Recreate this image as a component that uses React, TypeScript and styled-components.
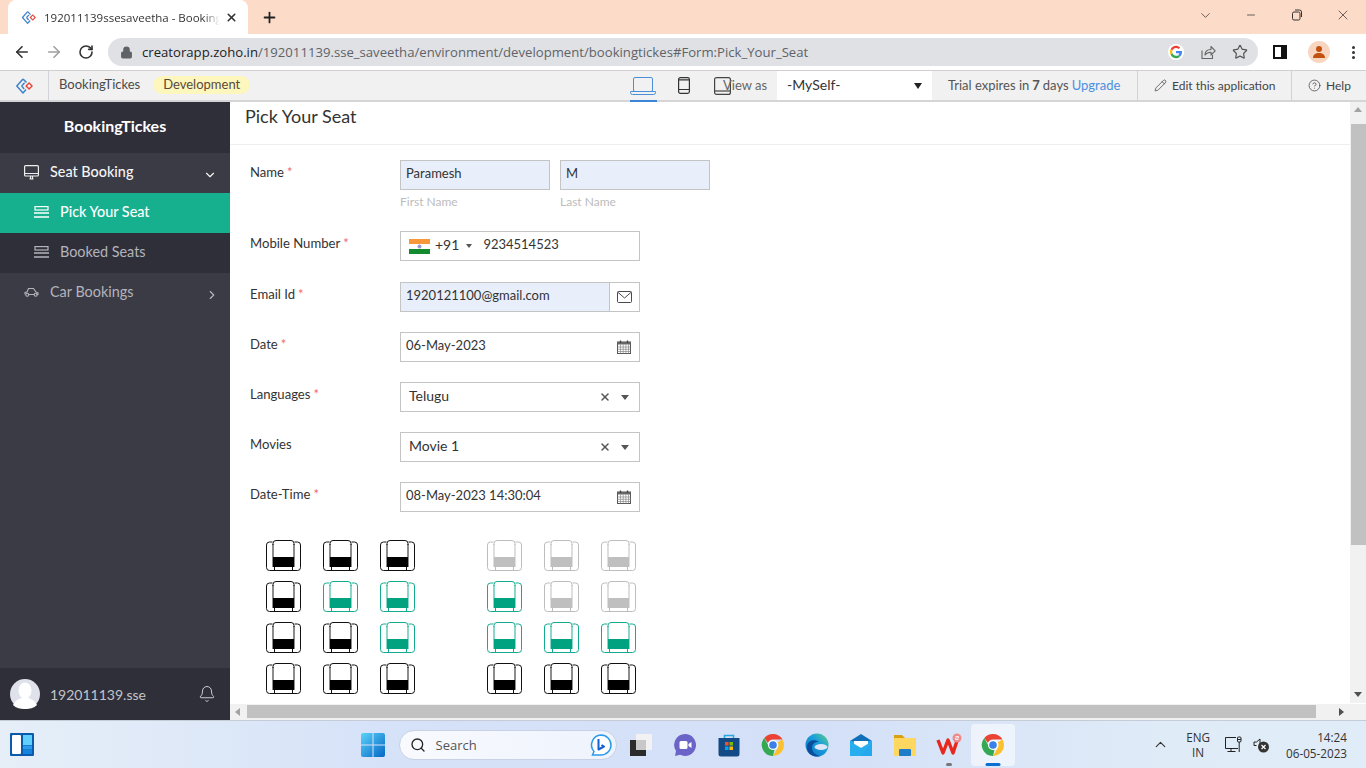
import React from 'react';
import styled, { createGlobalStyle } from 'styled-components';
import {
  ArrowLeft,
  ArrowRight,
  Bell,
  ChevronDown,
  ChevronRight,
  ChevronUp,
  CircleHelp,
  Lock,
  Minus,
  Pencil,
  Plus,
  RotateCw,
  Search,
  Star,
  X,
} from 'lucide-react';

const GlobalStyle = createGlobalStyle`
  html, body {
    margin: 0;
    padding: 0;
    width: 1366px;
    height: 768px;
    overflow: hidden;
    background: #fff;
    font-family: Lato, "Open Sans", sans-serif;
  }
  * { box-sizing: border-box; }
`;

const Screen = styled.div`
  width: 1366px;
  height: 768px;
  display: flex;
  flex-direction: column;
  overflow: hidden;
`;

/* browser chrome */
const TabStrip = styled.div`
  height: 34px;
  flex: none;
  background: #fcdcc8;
  display: flex;
  align-items: flex-end;
  padding-left: 8px;
`;

const Tab = styled.div`
  width: 240px;
  height: 34px;
  background: #fff;
  border-radius: 8px 8px 0 0;
  display: flex;
  align-items: center;
  padding: 0 10px 0 13px;
  font: 11.5px 'Open Sans', sans-serif;
  color: #333;
`;

const TabTitle = styled.span`
  margin-left: 8px;
  width: 181px;
  white-space: nowrap;
  overflow: hidden;
  -webkit-mask-image: linear-gradient(to right, #000 88%, transparent 97%);
  mask-image: linear-gradient(to right, #000 88%, transparent 97%);
`;

const NewTab = styled.div`
  margin-left: 13px;
  height: 34px;
  display: flex;
  align-items: center;
  color: #222;
`;

const WindowControls = styled.div`
  margin-left: auto;
  height: 34px;
  display: flex;
  color: #333;
`;

const WindowButton = styled.div`
  width: 46px;
  height: 30px;
  display: flex;
  align-items: center;
  justify-content: center;
`;

const Toolbar = styled.div`
  height: 36px;
  flex: none;
  background: #fff;
  display: flex;
  align-items: center;
  padding-left: 6px;
`;

const NavButton = styled.div<{ $muted?: boolean }>`
  width: 32px;
  display: flex;
  justify-content: center;
  color: ${({ $muted }) => ($muted ? '#a0a0a0' : '#333')};
`;

const Omnibox = styled.div`
  margin-left: 6px;
  width: 1150px;
  height: 28px;
  border-radius: 14px;
  background: #dfe1e5;
  display: flex;
  align-items: center;
  padding: 0 10px 0 12px;
  font: 13.15px 'Open Sans', sans-serif;
  color: #5f6368;
  white-space: nowrap;
`;

const Host = styled.span`
  color: #222;
`;

const UrlText = styled.span`
  margin-left: 9px;
`;

const OmniIcons = styled.div`
  margin-left: auto;
  display: flex;
  align-items: center;
  gap: 16px;
  color: #555;
`;

const ToolIcons = styled.div`
  display: flex;
  align-items: center;
  margin-left: 15px;
`;

const Avatar = styled.div`
  width: 22px;
  height: 22px;
  margin-left: 21px;
  border-radius: 50%;
  background: #f8d5c0;
  display: flex;
  align-items: center;
  justify-content: center;
`;

const Dots = styled.div`
  margin-left: 22px;
  display: flex;
  flex-direction: column;
  gap: 2px;
`;

const Dot = styled.i`
  display: block;
  width: 3px;
  height: 3px;
  border-radius: 50%;
  background: #333;
`;

/* zoho creator bar */
const AppBar = styled.div`
  height: 32px;
  flex: none;
  background: #f1f1f1;
  border-top: 1px solid #d0d0d0;
  border-bottom: 2px solid #d5d5d8;
  display: flex;
  align-items: stretch;
  font-size: 13px;
  color: #444;
`;

const LogoCell = styled.div`
  width: 49px;
  border-right: 1px solid #d2d2da;
  display: flex;
  align-items: center;
  justify-content: center;
`;

const AppName = styled.div`
  margin-left: 10px;
  padding-bottom: 3px;
  display: flex;
  align-items: center;
  color: #4a4a4a;
`;

const EnvPill = styled.div`
  margin: 5px 0 6px 13px;
  padding: 0 10px 2px;
  border-radius: 10px;
  background: #fdf6bd;
  display: flex;
  align-items: center;
  color: #5a4a3a;
`;

const BarRight = styled.div`
  margin-left: auto;
  display: flex;
  align-items: stretch;
`;

const DeviceTab = styled.div<{ $active?: boolean; $gap: number }>`
  width: 27px;
  display: flex;
  align-items: center;
  justify-content: center;
  margin-right: ${({ $gap }) => $gap}px;
  margin-bottom: -2px;
  border-bottom: 2px solid ${({ $active }) => ($active ? '#3b86d8' : 'transparent')};
`;

const ViewAs = styled.div`
  margin-left: -12.5px;
  width: 54px;
  padding-bottom: 2px;
  display: flex;
  align-items: center;
  color: #666;
`;

const ViewSelect = styled.div`
  width: 155px;
  background: #fff;
  display: flex;
  align-items: center;
  justify-content: space-between;
  padding: 0 10px 2px;
  font-size: 14px;
  color: #333;
`;

const Caret = styled.i`
  width: 0;
  height: 0;
  margin-top: 2px;
  border-left: 4px solid transparent;
  border-right: 4px solid transparent;
  border-top: 6px solid #222;
`;

const Trial = styled.div`
  width: 205px;
  padding: 0 0 2px 16px;
  display: flex;
  align-items: center;
  gap: 3px;
  color: #555;
  white-space: nowrap;
`;

const Upgrade = styled.span`
  color: #4a90e2;
`;

const BarAction = styled.div<{ $width: number }>`
  width: ${({ $width }) => $width}px;
  border-left: 1px solid #d2d2d2;
  display: flex;
  align-items: center;
  padding-left: 16px;
  gap: 5px;
  font-size: 12px;
  color: #444;
`;

/* main area */
const Body = styled.div`
  flex: 1;
  min-height: 0;
  display: flex;
`;

const Sidebar = styled.aside`
  width: 230px;
  flex: none;
  display: flex;
  flex-direction: column;
  background: #3b3b46;
`;

const Brand = styled.div`
  height: 51px;
  padding-bottom: 4px;
  background: #2f2f3a;
  color: #fff;
  font-size: 16px;
  font-weight: 700;
  display: flex;
  align-items: center;
  justify-content: center;
`;

const NavItem = styled.div<{ $variant: 'parent' | 'open' | 'active' | 'child' }>`
  height: 40px;
  flex: none;
  display: flex;
  align-items: center;
  gap: 11px;
  padding: 0 ${({ $variant }) => ($variant === 'parent' ? 11 : 13)}px 4px
    ${({ $variant }) => ($variant === 'active' || $variant === 'child' ? '34px' : '24px')};
  font-size: 14.4px;
  font-weight: ${({ $variant }) => ($variant === 'open' || $variant === 'active' ? 500 : 400)};
  background: ${({ $variant }) =>
    $variant === 'active' ? '#17b08f' : $variant === 'child' ? '#2f2f3a' : '#3b3b46'};
  color: ${({ $variant }) =>
    $variant === 'active' ? '#fff' : $variant === 'open' ? '#f4f4f4' : '#b4b4ba'};

  > svg {
    margin-top: 2px;
  }
`;

const NavTail = styled.span`
  margin-left: auto;
  margin-top: 8px;
  display: flex;
`;

const SideSpacer = styled.div`
  flex: 1;
`;

const UserBar = styled.div`
  height: 52px;
  flex: none;
  background: #2f2f3a;
  display: flex;
  align-items: center;
  padding: 0 14px 0 10px;
  color: #c4c4c8;
  font-size: 14px;
`;

const UserName = styled.span`
  margin-left: 10px;
`;

const BellWrap = styled.span`
  margin-left: auto;
  display: flex;
  color: #d0d0d4;
`;

const Workspace = styled.div`
  flex: 1;
  min-width: 0;
  display: flex;
  flex-direction: column;
`;

const WorkRow = styled.div`
  flex: 1;
  min-height: 0;
  display: flex;
`;

const Page = styled.main`
  flex: 1;
  min-width: 0;
  overflow: hidden;
  background: #fff;
`;

const PageHeader = styled.header`
  height: 43px;
  padding: 3px 0 0 15px;
  border-bottom: 1px solid #eee;
  font-size: 18px;
  color: #333;
  line-height: 22px;
`;

const Form = styled.div`
  padding: 15px 0 0 20px;
`;

const Row = styled.div<{ $gap?: number }>`
  display: flex;
  margin-bottom: ${({ $gap }) => $gap ?? 20}px;
`;

const Label = styled.div`
  width: 150px;
  padding-top: 4px;
  font-size: 13.1px;
  line-height: 16px;
  color: #333;
`;

const Req = styled.span`
  color: #f06a6a;
  margin-left: 3px;
`;

const NameGroup = styled.div`
  width: 150px;
  margin-right: 10px;
`;

const SubLabel = styled.div`
  margin-top: 4px;
  font-size: 12px;
  line-height: 16px;
  color: #bcbcbc;
`;

const Field = styled.div<{ $width?: number; $filled?: boolean; $inset?: number }>`
  width: ${({ $width }) => $width ?? 240}px;
  height: 30px;
  border: 1px solid #c4c4c4;
  background: ${({ $filled }) => ($filled ? '#e8effb' : '#fff')};
  display: flex;
  align-items: center;
  padding: 0 ${({ $filled }) => ($filled ? 6 : 8)}px 0 ${({ $inset }) => $inset ?? 5}px;
  font-size: 13px;
  color: #333;
  white-space: nowrap;
`;

const FieldValue = styled.span<{ $select?: boolean }>`
  margin-bottom: 4px;
  font-size: ${({ $select }) => ($select ? 14 : 13)}px;
`;

const PhoneCode = styled.span`
  margin: 0 0 4px 5px;
  font-size: 14px;
`;

const SmallCaret = styled.i`
  width: 0;
  height: 0;
  margin: 0 11px 0 7px;
  border-left: 3px solid transparent;
  border-right: 3px solid transparent;
  border-top: 4px solid #555;
`;

const Trailing = styled.span`
  margin-left: auto;
  display: flex;
  align-items: center;
  gap: 10px;
  color: #555;
`;

const SelectCaret = styled.i`
  width: 0;
  height: 0;
  border-left: 4px solid transparent;
  border-right: 4px solid transparent;
  border-top: 5px solid #555;
  margin-right: 2px;
`;

const EmailBox = styled.div`
  width: 240px;
  display: flex;
`;

const EmailAddon = styled.div`
  width: 31px;
  height: 30px;
  flex: none;
  margin-left: -1px;
  border: 1px solid #c4c4c4;
  display: flex;
  align-items: center;
  justify-content: center;
`;

const SeatArea = styled.div`
  display: flex;
  gap: 72px;
  padding: 8px 0 0 16px;
`;

const SeatGrid = styled.div`
  display: grid;
  grid-template-columns: repeat(3, 35px);
  grid-auto-rows: 31px;
  column-gap: 22px;
  row-gap: 10px;
`;

/* scrollbars */
const VScroll = styled.div`
  width: 16px;
  flex: none;
  background: #f1f1f1;
  display: flex;
  flex-direction: column;
  align-items: center;
  padding-top: 22px;
  position: relative;
`;

const VThumb = styled.div`
  width: 15px;
  height: 421px;
  background: #c1c1c1;
`;

const ScrollArrow = styled.i<{ $dir: 'up' | 'down' | 'left' | 'right' }>`
  position: absolute;
  width: 0;
  height: 0;
  ${({ $dir }) =>
    $dir === 'up'
      ? 'top: 5px; left: 4px; border: 4px solid transparent; border-top: 0; border-bottom: 5px solid #a3a3a3;'
      : $dir === 'down'
        ? 'bottom: 6px; left: 4px; border: 4px solid transparent; border-bottom: 0; border-top: 5px solid #505050;'
        : $dir === 'left'
          ? 'top: 4px; left: 5px; border: 4px solid transparent; border-left: 0; border-right: 5px solid #a3a3a3;'
          : 'top: 4px; right: 22px; border: 4px solid transparent; border-right: 0; border-left: 5px solid #505050;'}
`;

const HScroll = styled.div`
  height: 17px;
  flex: none;
  position: relative;
  background: #f1f1f1;
  padding: 1px 0 1px 17px;
  border-top: 1px solid #fff;
`;

const HThumb = styled.div`
  width: 1069px;
  height: 13px;
  background: #c1c1c1;
`;

/* windows taskbar */
const Taskbar = styled.footer`
  height: 48px;
  flex: none;
  border-top: 1px solid #c4ccd8;
  background: linear-gradient(90deg, #e6eff8 0%, #d6e2f8 28%, #d4e0f7 60%, #dfebf7 85%, #e0ecf7 100%);
  display: grid;
  grid-template-columns: 1fr auto 1fr;
  align-items: center;
`;

const WidgetSlot = styled.div`
  padding-left: 10px;
  display: flex;
`;

const TaskCenter = styled.div`
  display: flex;
  align-items: center;
  margin-left: 8px;
`;

const StartButton = styled.div`
  display: flex;
  margin-left: 1px;
`;

const SearchBox = styled.div`
  width: 218px;
  height: 30px;
  margin: 0 2px 0 14px;
  border-radius: 15px;
  background: linear-gradient(90deg, #f8fafe, #eef3fd);
  border: 1px solid #c9d2e4;
  display: flex;
  align-items: center;
  padding: 0 3px 0 10px;
  gap: 10px;
  font: 13px 'Open Sans', sans-serif;
  color: #555;
`;

const TaskIcon = styled.div<{ $active?: boolean }>`
  position: relative;
  width: 44px;
  height: 42px;
  display: flex;
  align-items: center;
  justify-content: center;
  border-radius: 4px;
  background: ${({ $active }) => ($active ? 'rgba(255,255,255,.55)' : 'transparent')};
`;

const RunDot = styled.i<{ $active?: boolean }>`
  position: absolute;
  bottom: 0;
  left: 50%;
  transform: translateX(-50%);
  height: 3px;
  border-radius: 2px;
  width: ${({ $active }) => ($active ? 15 : 6)}px;
  background: ${({ $active }) => ($active ? '#0a6fd0' : '#777')};
`;

const Tray = styled.div`
  display: flex;
  align-items: center;
  justify-content: flex-end;
  padding-right: 19px;
  color: #333;
  font: 11.7px 'Open Sans', sans-serif;
`;

const Lang = styled.div`
  margin: 0 14px 0 17px;
  text-align: center;
  line-height: 15px;
`;

const TrayIcon = styled.span`
  display: flex;
  margin-right: 9px;
`;

const Clock = styled.div`
  margin-left: 7px;
  text-align: right;
  line-height: 16px;
`;

/* drawings */
const ZohoLogo: React.FC<{ size?: number }> = ({ size = 18 }) => (
  <svg width={size} height={size} viewBox="0 0 18 18" fill="none">
    <path d="M8 2 1.800 9 8 16l3-3.400" stroke="#3f83c9" strokeWidth="1.500" strokeLinejoin="round" />
    <path d="M8 2l3.500 3.600M6.600 9l3-3.200M6.600 9l2.600 3" stroke="#3f83c9" strokeWidth="1.500" />
    <rect x="12" y="6.900" width="4.200" height="4.200" transform="rotate(45 14.100 9)" stroke="#e8453c" strokeWidth="1.400" />
  </svg>
);

const GoogleG = () => (
  <svg width="16" height="16" viewBox="0 0 48 48">
    <circle cx="24" cy="24" r="24" fill="#fff" />
    <path fill="#ea4335" d="M24 12c3.200 0 5.700 1.100 7.700 3l4.600-4.600C33 7.400 28.900 5.500 24 5.500 17 5.500 10.800 9.600 7.900 15.500l5.400 4.200C14.700 15.300 18.900 12 24 12z" />
    <path fill="#4285f4" d="M42 24.400c0-1.300-.1-2.500-.3-3.700H24v7h10.100c-.4 2.300-1.700 4.300-3.700 5.600l5.700 4.400C39.500 34.500 42 29.900 42 24.400z" />
    <path fill="#fbbc05" d="M13.300 28.300c-.4-1.300-.6-2.700-.6-4.300s.2-3 .6-4.300l-5.400-4.200C6.700 18 6 20.900 6 24s.7 6 1.900 8.500z" />
    <path fill="#34a853" d="M24 42.500c5 0 9.100-1.600 12.100-4.500l-5.700-4.400c-1.600 1.100-3.700 1.800-6.400 1.800-5.100 0-9.300-3.300-10.700-7.700l-5.400 4.200C10.800 38.400 17 42.500 24 42.500z" />
  </svg>
);

const ChromeShare = () => (
  <svg width="16" height="16" viewBox="0 0 16 16" fill="none" stroke="#666" strokeWidth="1.100" strokeLinejoin="round">
    <path d="M2 6.500V14.500H12.500V11" />
    <path d="M5 11c0-3.800 2.800-5.500 6-5.500V2.500l4.200 4.300L11 11V8.200C8.500 8.200 6.300 9 5 11z" />
  </svg>
);

const SidePanelIcon = () => (
  <svg width="14" height="14" viewBox="0 0 14 14">
    <rect x="1" y="1" width="12" height="12" fill="none" stroke="#111" strokeWidth="2" />
    <rect x="8" y="1" width="5" height="12" fill="#111" />
  </svg>
);

const PersonIcon = () => (
  <svg width="14" height="14" viewBox="0 0 14 14" fill="#c2500f">
    <circle cx="7" cy="4" r="3" />
    <path d="M1 13c0-3.500 2.500-5 6-5s6 1.500 6 5z" />
  </svg>
);

const LaptopIcon = () => (
  <svg width="26" height="18" viewBox="0 0 26 18" fill="none" stroke="#4a8fd8" strokeWidth="1">
    <rect x="3.500" y=".5" width="19" height="14" rx="1.500" />
    <path d="M.5 14.500h25v1a2 2 0 0 1-2 2h-21a2 2 0 0 1-2-2z" />
  </svg>
);

const PhoneIcon = () => (
  <svg width="12" height="17" viewBox="0 0 12 17" fill="none" stroke="#333" strokeWidth="1.200">
    <rect x=".6" y=".6" width="10.800" height="15.800" rx="1.800" />
    <path d="M.6 12.500h10.800M.6 2.800h10.800" />
  </svg>
);

const TabletIcon = () => (
  <svg width="17" height="18" viewBox="0 0 17 18" fill="none" stroke="#444" strokeWidth="1.200">
    <rect x=".6" y=".6" width="15.800" height="16.800" rx="2" />
    <path d="M.6 14h15.800" />
  </svg>
);

const MonitorIcon = () => (
  <svg width="15" height="15" viewBox="0 0 15 15" fill="none" stroke="#eee" strokeWidth="1.200">
    <rect x=".6" y=".6" width="13.800" height="10.400" rx="1" />
    <path d="M.6 8.500h13.800M5.500 14h4M6.500 11v3M8.500 11v3" />
  </svg>
);

const ListIcon: React.FC<{ color: string }> = ({ color }) => (
  <svg width="15" height="12" viewBox="0 0 15 12" fill="none" stroke={color} strokeWidth="1.200">
    <rect x="1" y=".6" width="13" height="3.400" />
    <path d="M0 7h15M0 11h15" strokeWidth="1.500" />
  </svg>
);

const CarIcon = () => (
  <svg width="15" height="12" viewBox="0 0 15 12" fill="none" stroke="#b4b4ba" strokeWidth="1.100">
    <path d="M1 8.500V6.500l2-.5 1.500-3.500h5L12 6l2 .8v1.700h-1.500M4.500 8.500h6" />
    <circle cx="3.300" cy="8.800" r="1.500" />
    <circle cx="11.700" cy="8.800" r="1.500" />
  </svg>
);

const UserPhoto = () => (
  <svg width="30" height="30" viewBox="0 0 30 30">
    <circle cx="15" cy="15" r="15" fill="#dfe2ea" />
    <ellipse cx="15" cy="11.500" rx="6.500" ry="8" fill="#fff" />
    <path d="M3 26c2-5 7-6 9-7.500h6c2 1.500 7 2.500 9 7.500-3 3-7.500 4-12 4s-9-1-12-4z" fill="#fff" />
  </svg>
);

const IndiaFlag = () => (
  <svg width="21" height="15" viewBox="0 0 21 15">
    <rect width="21" height="5" fill="#f7993a" />
    <rect y="5" width="21" height="5" fill="#fff" />
    <rect y="10" width="21" height="5" fill="#138a2e" />
    <circle cx="10.500" cy="7.500" r="2" fill="#9a9ac8" />
  </svg>
);

const EnvelopeIcon = () => (
  <svg width="15" height="12" viewBox="0 0 15 12" fill="none" stroke="#4a4a4a" strokeWidth="1">
    <rect x=".5" y=".5" width="14" height="11" rx="1" />
    <path d="M.8 1.200 7.500 7l6.700-5.800" />
  </svg>
);

const CalendarGrid = () => (
  <svg width="14" height="14" viewBox="0 0 14 14" fill="none">
    <rect x=".5" y="2" width="13" height="11.500" stroke="#555" />
    <rect x=".5" y="2" width="13" height="2.500" fill="#666" />
    <path d="M3.500.5v2.500M10.500.5v2.500" stroke="#444" strokeWidth="1.400" />
    <path d="M.5 7h13M.5 9.300h13M.5 11.500h13M3.500 4.500v9M6.200 4.500v9M8.900 4.500v9M11.500 4.500v9" stroke="#888" strokeWidth=".7" />
  </svg>
);

type SeatTone = 'black' | 'teal' | 'grey';

const seatColors: Record<SeatTone, { line: string; fill: string }> = {
  black: { line: '#111', fill: '#000' },
  teal: { line: '#12ab8f', fill: '#00a27f' },
  grey: { line: '#bdbdbd', fill: '#bfbfbf' },
};

const Seat: React.FC<{ tone: SeatTone }> = ({ tone }) => {
  const { line, fill } = seatColors[tone];
  return (
    <svg width="35" height="31" viewBox="0 0 35 31" fill="none">
      <rect x=".5" y="2" width="34" height="28.500" rx="3" stroke={line} />
      <rect x="6.500" y="0" width="22" height="6" fill="#fff" />
      <path d="M7 5V3.500Q7 .5 10 .5H25q3 0 3 3V5" stroke={line} />
      <path d="M7 4v23M28 4v23" stroke={line} strokeWidth="1.600" opacity=".6" />
      <rect x="7" y="17" width="21" height="10" fill={fill} />
      <path d="M8.500 27v3.500M26.500 27v3.500" stroke={line} />
    </svg>
  );
};

const WindowsLogo = () => (
  <svg width="24" height="24" viewBox="0 0 24 24">
    <defs>
      <linearGradient id="win" x1="0" y1="0" x2="1" y2="1">
        <stop offset="0" stopColor="#5bd2fb" />
        <stop offset="1" stopColor="#0467c4" />
      </linearGradient>
    </defs>
    <path fill="url(#win)" d="M0 2a2 2 0 0 1 2-2h9.500v11.500H0zM12.500 0H22a2 2 0 0 1 2 2v9.500H12.500zM0 12.500h11.500V24H2a2 2 0 0 1-2-2zM12.500 12.500H24V22a2 2 0 0 1-2 2h-9.500z" />
  </svg>
);

const WidgetsIcon = () => (
  <svg width="24" height="23" viewBox="0 0 24 23">
    <rect width="24" height="23" rx="1" fill="#0c5bab" />
    <rect x="2" y="2" width="9" height="19" rx="1" fill="#fff" />
    <rect x="13" y="2" width="9" height="10" fill="#5fd0fb" />
    <rect x="13" y="12.500" width="9" height="4" fill="#2a9cf0" />
    <rect x="13" y="17" width="9" height="4" fill="#1583e0" />
  </svg>
);

const BingIcon = () => (
  <svg width="24" height="24" viewBox="0 0 24 24" fill="none">
    <path d="M12 2a10 10 0 0 1 0 20H3.500l1.500-3.500A10 10 0 0 1 12 2z" fill="#fff" stroke="#2a9be8" strokeWidth="1.500" />
    <path d="M9.500 6v10.500l5.500-3-2.500-1.500" stroke="#1560d4" strokeWidth="2" strokeLinejoin="round" />
  </svg>
);

const TaskViewIcon = () => (
  <svg width="24" height="24" viewBox="0 0 24 24">
    <rect x="7" y="1" width="16" height="16" fill="#f2f2f4" />
    <rect x="1" y="7" width="16" height="16" fill="#2b2b2b" />
    <rect x="7" y="7" width="10" height="10" fill="#c8c8c8" />
  </svg>
);

const MeetIcon = () => (
  <svg width="24" height="24" viewBox="0 0 24 24">
    <path d="M12 1a11 11 0 1 1-5 20.800L2 23l1-5A11 11 0 0 1 12 1z" fill="#6a63c8" />
    <rect x="6.500" y="8" width="8" height="8" rx="1.500" fill="#fff" />
    <path d="M15.500 11l3-2v6l-3-2z" fill="#fff" />
  </svg>
);

const StoreIcon = () => (
  <svg width="24" height="24" viewBox="0 0 24 24">
    <path d="M7.500 5V2.500h9V5" fill="none" stroke="#29a8e0" strokeWidth="1.500" />
    <path d="M1.500 5h21v16a2.500 2.500 0 0 1-2.500 2.500H4A2.500 2.500 0 0 1 1.500 21z" fill="#124a86" />
    <rect x="8" y="9" width="3.500" height="3.500" fill="#f25022" />
    <rect x="12.500" y="9" width="3.500" height="3.500" fill="#7fba00" />
    <rect x="8" y="13.500" width="3.500" height="3.500" fill="#00a4ef" />
    <rect x="12.500" y="13.500" width="3.500" height="3.500" fill="#ffb900" />
  </svg>
);

const ChromeIcon = () => (
  <svg width="24" height="24" viewBox="0 0 24 24">
    <path d="M12 1a11 11 0 0 1 9.500 5.500H12a5.500 5.500 0 0 0-5.100 3.500L3.300 5A11 11 0 0 1 12 1z" fill="#ea4335" />
    <path d="M21.500 6.500A11 11 0 0 1 12 23l4.700-8.200a5.500 5.500 0 0 0 .1-5.500z" fill="#fbc02d" />
    <path d="M12 23A11 11 0 0 1 3.300 5l4.600 8.500a5.500 5.500 0 0 0 5.600 3.300z" fill="#34a853" />
    <circle cx="12" cy="12" r="5" fill="#fff" />
    <circle cx="12" cy="12" r="3.800" fill="#3b7fe8" />
  </svg>
);

const EdgeIcon = () => (
  <svg width="24" height="24" viewBox="0 0 24 24">
    <defs>
      <linearGradient id="edge" x1="0" y1="1" x2="1" y2="0">
        <stop offset="0" stopColor="#0c70c4" />
        <stop offset=".6" stopColor="#1ba0dc" />
        <stop offset="1" stopColor="#5fd47a" />
      </linearGradient>
    </defs>
    <circle cx="12" cy="12" r="11.500" fill="url(#edge)" />
    <path d="M2 13C3 7 10 5.500 14 9c-3-.5-7 1-7 6 0 4 4 7.500 8 8C9 25 1 21 2 13z" fill="#0b4f9c" />
    <ellipse cx="16" cy="14" rx="6.500" ry="3" fill="#dbe6f8" />
  </svg>
);

const MailIcon = () => (
  <svg width="24" height="24" viewBox="0 0 24 24">
    <path d="M12 1 23 8v15H1V8z" fill="#0f6fb8" />
    <rect x="1" y="8" width="22" height="15" fill="#25a9ec" />
    <path d="M5 8h14v3l-7 4-7-4z" fill="#fff" />
    <path d="M1 8l11 7 11-7v1L12 23H1z" fill="#2bb2f2" opacity=".55" />
  </svg>
);

const FolderIcon = () => (
  <svg width="24" height="24" viewBox="0 0 24 24">
    <path d="M1 2h8l3 3h11v4H1z" fill="#d9a011" />
    <rect x="1" y="5" width="22" height="18" rx="1" fill="#fdd75f" />
    <rect x="6" y="16" width="12" height="7" rx="1" fill="#1f7cc9" />
  </svg>
);

const WpsIcon = () => (
  <svg width="26" height="24" viewBox="0 0 26 24" fill="none">
    <path d="M2 7l5 13 5-13 5 13 5-15" stroke="#e8281c" strokeWidth="3.400" strokeLinejoin="round" />
    <circle cx="21" cy="5" r="4.500" fill="#f08a8a" />
    <path d="M19.500 3.500h3v1.500h-3v1.500h3" stroke="#fff" strokeWidth=".8" />
  </svg>
);

const NetworkIcon = () => (
  <svg width="20" height="18" viewBox="0 0 20 18" fill="none" stroke="#222" strokeWidth="1">
    <path d="M12 1.500H1.500v11H14M7 12.500v3M3.500 15.500h8" />
    <rect x="13.500" y="1" width="3.500" height="5" rx="1" />
    <path d="M13.500 3.500H17M15.200 6v10" />
  </svg>
);

const MutedIcon = () => (
  <svg width="17" height="17" viewBox="0 0 17 17">
    <path d="M1 6h2.500L7 3v7" fill="none" stroke="#222" />
    <path d="M1 6v3.500h2.500" fill="none" stroke="#222" />
    <circle cx="10.500" cy="11" r="5.500" fill="#333" />
    <path d="M8.500 9l4 4M12.500 9l-4 4" stroke="#fff" strokeWidth="1.200" />
  </svg>
);

const leftSeats: SeatTone[] = [
  'black', 'black', 'black',
  'black', 'teal', 'teal',
  'black', 'black', 'teal',
  'black', 'black', 'black',
];

const rightSeats: SeatTone[] = [
  'grey', 'grey', 'grey',
  'teal', 'grey', 'grey',
  'teal', 'teal', 'teal',
  'black', 'black', 'black',
];

const dockIcons = [
  { key: 'taskview', icon: <TaskViewIcon /> },
  { key: 'meet', icon: <MeetIcon /> },
  { key: 'store', icon: <StoreIcon /> },
  { key: 'chrome', icon: <ChromeIcon /> },
  { key: 'edge', icon: <EdgeIcon /> },
  { key: 'mail', icon: <MailIcon /> },
  { key: 'folder', icon: <FolderIcon /> },
];

const App: React.FC = () => (
  <Screen>
    <GlobalStyle />
    <TabStrip>
      <Tab>
        <ZohoLogo size={15} />
        <TabTitle>192011139ssesaveetha - Booking</TabTitle>
        <X size={13} strokeWidth={3} color="#333" />
      </Tab>
      <NewTab>
        <Plus size={17} strokeWidth={2.5} />
      </NewTab>
      <WindowControls>
        <WindowButton><ChevronDown size={15} strokeWidth={1.2} /></WindowButton>
        <WindowButton><Minus size={12} strokeWidth={1.5} /></WindowButton>
        <WindowButton>
          <svg width="12" height="12" viewBox="0 0 12 12" fill="none" stroke="#333">
            <rect x="1.500" y="3" width="7.500" height="8" rx="1.500" />
            <path d="M4 1h4.500A2 2 0 0 1 10.500 3v5" />
          </svg>
        </WindowButton>
        <WindowButton><X size={16} strokeWidth={1.1} /></WindowButton>
      </WindowControls>
    </TabStrip>
    <Toolbar>
      <NavButton><ArrowLeft size={18} strokeWidth={2.2} /></NavButton>
      <NavButton $muted><ArrowRight size={18} strokeWidth={2.2} /></NavButton>
      <NavButton><RotateCw size={16} strokeWidth={2.4} /></NavButton>
      <Omnibox>
        <Lock size={13} fill="#5f6368" strokeWidth={2} />
        <UrlText>
          <Host>creatorapp.zoho.in</Host>/192011139.sse_saveetha/environment/development/bookingtickes#Form:Pick_Your_Seat
        </UrlText>
        <OmniIcons>
          <GoogleG />
          <ChromeShare />
          <Star size={16} strokeWidth={1.8} />
        </OmniIcons>
      </Omnibox>
      <ToolIcons>
        <SidePanelIcon />
        <Avatar><PersonIcon /></Avatar>
        <Dots><Dot /><Dot /><Dot /></Dots>
      </ToolIcons>
    </Toolbar>
    <AppBar>
      <LogoCell><ZohoLogo /></LogoCell>
      <AppName>BookingTickes</AppName>
      <EnvPill>Development</EnvPill>
      <BarRight>
        <DeviceTab $active $gap={14}><LaptopIcon /></DeviceTab>
        <DeviceTab $gap={11}><PhoneIcon /></DeviceTab>
        <DeviceTab $gap={0}><TabletIcon /></DeviceTab>
        <ViewAs>View as</ViewAs>
        <ViewSelect>-MySelf-<Caret /></ViewSelect>
        <Trial>Trial expires in <b>7</b> days <Upgrade>Upgrade</Upgrade></Trial>
        <BarAction $width={154}><Pencil size={13} strokeWidth={1.4} />Edit this application</BarAction>
        <BarAction $width={75}><CircleHelp size={13} strokeWidth={1.4} />Help</BarAction>
      </BarRight>
    </AppBar>
    <Body>
      <Sidebar>
        <Brand>BookingTickes</Brand>
        <NavItem $variant="open">
          <MonitorIcon />
          Seat Booking
          <NavTail><ChevronDown size={14} strokeWidth={2} /></NavTail>
        </NavItem>
        <NavItem $variant="active"><ListIcon color="#fff" />Pick Your Seat</NavItem>
        <NavItem $variant="child"><ListIcon color="#b4b4ba" />Booked Seats</NavItem>
        <NavItem $variant="parent">
          <CarIcon />
          Car Bookings
          <NavTail><ChevronRight size={14} strokeWidth={2} /></NavTail>
        </NavItem>
        <SideSpacer />
        <UserBar>
          <UserPhoto />
          <UserName>192011139.sse</UserName>
          <BellWrap><Bell size={18} strokeWidth={1.3} /></BellWrap>
        </UserBar>
      </Sidebar>
      <Workspace>
        <WorkRow>
          <Page>
            <PageHeader>Pick Your Seat</PageHeader>
            <Form>
              <Row $gap={21}>
                <Label>Name<Req>*</Req></Label>
                <NameGroup>
                  <Field $width={150} $filled><FieldValue>Paramesh</FieldValue></Field>
                  <SubLabel>First Name</SubLabel>
                </NameGroup>
                <NameGroup>
                  <Field $width={150} $filled><FieldValue>M</FieldValue></Field>
                  <SubLabel>Last Name</SubLabel>
                </NameGroup>
              </Row>
              <Row $gap={21}>
                <Label>Mobile Number<Req>*</Req></Label>
                <Field $inset={8}>
                  <IndiaFlag />
                  <PhoneCode>+91</PhoneCode>
                  <SmallCaret />
                  <FieldValue>9234514523</FieldValue>
                </Field>
              </Row>
              <Row>
                <Label>Email Id<Req>*</Req></Label>
                <EmailBox>
                  <Field $width={210} $filled><FieldValue>1920121100@gmail.com</FieldValue></Field>
                  <EmailAddon><EnvelopeIcon /></EmailAddon>
                </EmailBox>
              </Row>
              <Row>
                <Label>Date<Req>*</Req></Label>
                <Field>
                  <FieldValue>06-May-2023</FieldValue>
                  <Trailing><CalendarGrid /></Trailing>
                </Field>
              </Row>
              <Row>
                <Label>Languages<Req>*</Req></Label>
                <Field $inset={8}>
                  <FieldValue $select>Telugu</FieldValue>
                  <Trailing><X size={12} strokeWidth={3} /><SelectCaret /></Trailing>
                </Field>
              </Row>
              <Row>
                <Label>Movies</Label>
                <Field $inset={8}>
                  <FieldValue $select>Movie 1</FieldValue>
                  <Trailing><X size={12} strokeWidth={3} /><SelectCaret /></Trailing>
                </Field>
              </Row>
              <Row>
                <Label>Date-Time<Req>*</Req></Label>
                <Field>
                  <FieldValue>08-May-2023 14:30:04</FieldValue>
                  <Trailing><CalendarGrid /></Trailing>
                </Field>
              </Row>
              <SeatArea>
                <SeatGrid>
                  {leftSeats.map((tone, i) => <Seat key={i} tone={tone} />)}
                </SeatGrid>
                <SeatGrid>
                  {rightSeats.map((tone, i) => <Seat key={i} tone={tone} />)}
                </SeatGrid>
              </SeatArea>
            </Form>
          </Page>
          <VScroll>
            <ScrollArrow $dir="up" />
            <VThumb />
            <ScrollArrow $dir="down" />
          </VScroll>
        </WorkRow>
        <HScroll>
          <ScrollArrow $dir="left" />
          <HThumb />
          <ScrollArrow $dir="right" />
        </HScroll>
      </Workspace>
    </Body>
    <Taskbar>
      <WidgetSlot><WidgetsIcon /></WidgetSlot>
      <TaskCenter>
        <StartButton><WindowsLogo /></StartButton>
        <SearchBox>
          <Search size={16} strokeWidth={2} color="#222" />
          Search
          <Trailing><BingIcon /></Trailing>
        </SearchBox>
        {dockIcons.map(({ key, icon }) => <TaskIcon key={key}>{icon}</TaskIcon>)}
        <TaskIcon><WpsIcon /><RunDot /></TaskIcon>
        <TaskIcon $active><ChromeIcon /><RunDot $active /></TaskIcon>
      </TaskCenter>
      <Tray>
        <ChevronUp size={17} strokeWidth={1.6} />
        <Lang>ENG<br />IN</Lang>
        <TrayIcon><NetworkIcon /></TrayIcon>
        <TrayIcon><MutedIcon /></TrayIcon>
        <Clock>14:24<br />06-05-2023</Clock>
      </Tray>
    </Taskbar>
  </Screen>
);

export default App;
